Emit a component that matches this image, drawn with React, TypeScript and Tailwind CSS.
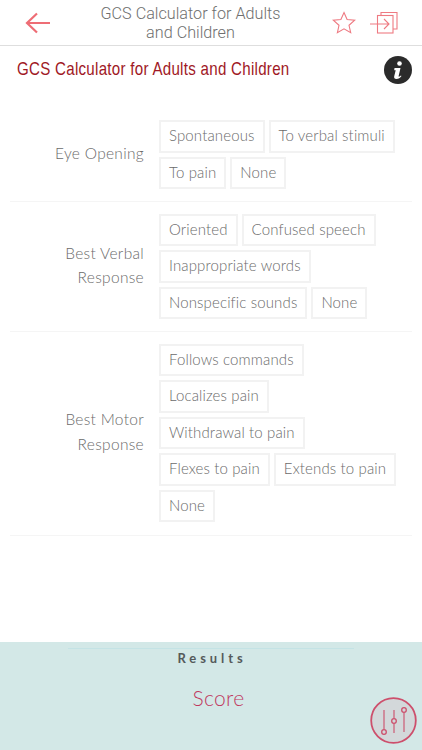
const sans = "font-['Lato','Noto_Sans',sans-serif]";

function Chip({ children }: { children: string }) {
  return (
    <div className="h-[32.5px] border-2 border-[#f2f2f2] px-2 pb-[2px] flex items-center text-[15px] font-light tracking-[0.13px] text-[#6b6b6b] whitespace-nowrap">
      {children}
    </div>
  );
}

function Row({ label, chips, pad }: { label: string[]; chips: string[]; pad: string }) {
  return (
    <div className={`flex items-center mx-[10px] border-b border-[#f5f5f5] pt-3 ${pad}`}>
      <div className="w-[134px] -mt-[2px] text-right text-[15.5px] font-light leading-[24.5px] tracking-[0.3px] text-[#6b6b6b]">
        {label.map((l) => (
          <div key={l}>{l}</div>
        ))}
      </div>
      <div className="ml-[15px] flex-1 flex flex-wrap gap-x-1 gap-y-1">
        {chips.map((c) => (
          <Chip key={c}>{c}</Chip>
        ))}
      </div>
    </div>
  );
}

export default function App() {
  return (
    <div className={`w-[422px] h-[750px] bg-white flex flex-col overflow-hidden relative ${sans}`}>
      <header className="h-[46px] shrink-0 border-b border-[#dedede] flex items-center pl-[25px] pr-[24px]">
        <svg width="26" height="22" viewBox="0 0 26 22" fill="none" stroke="#ee6d75" strokeWidth="2.2">
          <path d="M25 11H2M12 1.5 2 11l10 9.5" />
        </svg>
        <div className="flex-1 text-center text-[16.2px] leading-[19px] font-light text-[#6f6f6f] font-['Roboto',sans-serif] -ml-[2px]">
          <div>GCS Calculator for Adults</div>
          <div>and Children</div>
        </div>
        <svg width="24" height="24" viewBox="0 0 24 24" fill="none" stroke="#ee7a82" strokeWidth="1.1" className="mr-[14px]">
          <path d="M12 1.500l3.100 7 7.600.7-5.700 5.100 1.700 7.400-6.700-3.900-6.600 3.900 1.600-7.400L1.300 9.200l7.600-.7z" />
        </svg>
        <svg width="28" height="22" viewBox="0 0 28 22" fill="none" stroke="#ee7a82" strokeWidth="1.100">
          <path d="M11 3V.5h16V17h-4" />
          <rect x="7.500" y="3.500" width="15.500" height="17.500" />
          <path d="M0 12h19M14 7l5 5-5 5" />
        </svg>
      </header>
      <div className="flex items-center h-[47px] pl-[17px] pr-[10px] shrink-0">
        <div className="flex-1 whitespace-nowrap origin-left scale-x-[0.795] text-[19px] tracking-[0.35px] text-[#a01825] font-['Liberation_Sans',sans-serif]">
          GCS Calculator for Adults and Children
        </div>
        <svg width="28" height="28" viewBox="0 0 28 28">
          <circle cx="14" cy="14" r="14" fill="#2b2b2b" />
          <circle cx="15.500" cy="7.500" r="2.300" fill="#fff" />
          <path d="M10.500 12h6l-2 8.500c1 .3 1.600-.3 2.300-1l.7.6c-1.300 1.900-3 2.900-5 2.900-2 0-2.700-1.100-2.300-2.700l1.500-6h-1.500z" fill="#fff" />
        </svg>
      </div>
      <div className="h-[15px] shrink-0" />
      <Row pad="pb-[11.5px]" label={["Eye Opening"]} chips={["Spontaneous", "To verbal stimuli", "To pain", "None"]} />
      <Row
        pad="pb-[11.5px]"
        label={["Best Verbal", "Response"]}
        chips={["Oriented", "Confused speech", "Inappropriate words", "Nonspecific sounds", "None"]}
      />
      <Row
        pad="pb-[13px]"
        label={["Best Motor", "Response"]}
        chips={["Follows commands", "Localizes pain", "Withdrawal to pain", "Flexes to pain", "Extends to pain", "None"]}
      />
      <div className="flex-1" />
      <footer className="h-[108px] shrink-0 bg-[#d3e8e7] flex flex-col items-center">
        <div className="w-[286px] h-px mt-[6px] bg-[#c4e3e5]" />
        <div className="text-[13px] font-bold tracking-[3.9px] text-[#555a5b] leading-[16px] mt-[1px] ml-[2px]">Results</div>
        <div className="text-[21px] font-light leading-[24px] mt-[20px] ml-[15px] tracking-[0.3px] text-[#c0395f]">Score</div>
      </footer>
      <div className="absolute right-[5px] bottom-[6px] w-[47px] h-[47px]">
        <svg width="47" height="47" viewBox="0 0 47 47" fill="#d3d8da" stroke="#cd4f6c">
          <circle cx="23.500" cy="23.500" r="22.300" strokeWidth="1.800" />
          <path d="M14 13v19M24 13v8M24 27v9M34 16v19" fill="none" strokeWidth="1.100" />
          <circle cx="14" cy="35" r="2.300" strokeWidth="1.300" />
          <circle cx="24" cy="24" r="2.300" strokeWidth="1.300" />
          <circle cx="34" cy="13" r="2.300" strokeWidth="1.300" />
        </svg>
      </div>
    </div>
  );
}
